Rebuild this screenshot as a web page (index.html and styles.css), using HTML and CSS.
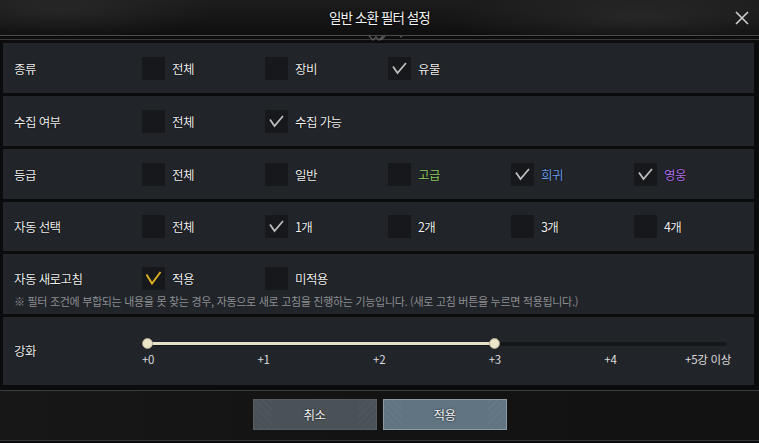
FILE: index.html
```html
<!DOCTYPE html>
<html lang="ko">
<head>
<meta charset="utf-8">
<title>일반 소환 필터 설정</title>
<link rel="stylesheet" href="styles.css">
</head>
<body>
<div class="dialog">
  <header class="titlebar">
    <div></div>
    <h1 class="title">일반 소환 필터 설정</h1>
    <button class="close" aria-label="닫기">
      <svg width="14" height="14" viewBox="0 0 14 14"><path d="M1 1 L13 13 M13 1 L1 13" stroke="#cfcfcf" stroke-width="1.6" fill="none"/></svg>
    </button>
  </header>
  <div class="divider">
    <svg class="ornament" width="40" height="8" viewBox="0 0 40 8"><path d="M2 1 L6 5 L9 2 L12 5 L16 1 M18 1 L14 5" stroke="#5a5a5a" stroke-width="1.3" fill="none"/><circle cx="34" cy="1.5" r="1.2" fill="#4a4a4a"/></svg>
  </div>
  <main class="rows">
    <section class="row">
      <div class="label">종류</div>
      <label class="opt"><span class="box"></span><span>전체</span></label>
      <label class="opt"><span class="box"></span><span>장비</span></label>
      <label class="opt"><span class="box checked"><svg viewBox="0 0 23 23"><path d="M5 9.5 L9.5 16 L18 6"/></svg></span><span>유물</span></label>
    </section>
    <section class="row">
      <div class="label">수집 여부</div>
      <label class="opt"><span class="box"></span><span>전체</span></label>
      <label class="opt"><span class="box checked"><svg viewBox="0 0 23 23"><path d="M5 9.5 L9.5 16 L18 6"/></svg></span><span>수집 가능</span></label>
    </section>
    <section class="row">
      <div class="label">등급</div>
      <label class="opt"><span class="box"></span><span>전체</span></label>
      <label class="opt"><span class="box"></span><span>일반</span></label>
      <label class="opt"><span class="box"></span><span class="grade-high">고급</span></label>
      <label class="opt"><span class="box checked"><svg viewBox="0 0 23 23"><path d="M5 9.5 L9.5 16 L18 6"/></svg></span><span class="grade-rare">희귀</span></label>
      <label class="opt"><span class="box checked"><svg viewBox="0 0 23 23"><path d="M5 9.5 L9.5 16 L18 6"/></svg></span><span class="grade-hero">영웅</span></label>
    </section>
    <section class="row row-short">
      <div class="label">자동 선택</div>
      <label class="opt"><span class="box"></span><span>전체</span></label>
      <label class="opt"><span class="box checked"><svg viewBox="0 0 23 23"><path d="M5 9.5 L9.5 16 L18 6"/></svg></span><span>1개</span></label>
      <label class="opt"><span class="box"></span><span>2개</span></label>
      <label class="opt"><span class="box"></span><span>3개</span></label>
      <label class="opt"><span class="box"></span><span>4개</span></label>
    </section>
    <section class="row row-refresh">
      <div class="label">자동 새로고침</div>
      <label class="opt"><span class="box checked gold"><svg viewBox="0 0 23 23"><path d="M4.5 7.5 L10 16.5 L18.5 5"/></svg></span><span>적용</span></label>
      <label class="opt"><span class="box"></span><span>미적용</span></label>
      <p class="note">※ 필터 조건에 부합되는 내용을 못 찾는 경우, 자동으로 새로 고침을 진행하는 기능입니다. (새로 고침 버튼을 누르면 적용됩니다.)</p>
    </section>
    <section class="row row-enhance">
      <div class="label">강화</div>
      <div class="slider">
        <div class="track">
          <div class="fill" style="width:60%"></div>
          <span class="thumb" style="left:0%"></span>
          <span class="thumb" style="left:60%"></span>
        </div>
        <div class="ticks">
          <span class="tick" style="left:0%">+0</span>
          <span class="tick" style="left:20%">+1</span>
          <span class="tick" style="left:40%">+2</span>
          <span class="tick" style="left:60%">+3</span>
          <span class="tick" style="left:80%">+4</span>
          <span class="tick tick-last" style="left:100%">+5강 이상</span>
        </div>
      </div>
    </section>
  </main>
  <footer class="footer">
    <button class="btn btn-cancel">취소</button>
    <button class="btn btn-ok">적용</button>
  </footer>
</div>
</body>
</html>
```
FILE: styles.css
```css
html, body {
  margin: 0;
  padding: 0;
  background: #0a0b0d;
}
body {
  width: 759px;
  height: 443px;
  overflow: hidden;
  font-family: "Noto Sans CJK KR", "Noto Sans", sans-serif;
  color: #e6e6e6;
}
.dialog {
  display: flex;
  flex-direction: column;
  height: 443px;
}
.titlebar {
  height: 35px;
  display: grid;
  grid-template-columns: 1fr auto 1fr;
  align-items: center;
  background:
    radial-gradient(ellipse 160px 30px at 60px 10px, rgba(80,80,80,0.25), transparent),
    radial-gradient(ellipse 200px 30px at 640px 18px, rgba(90,90,90,0.25), transparent),
    linear-gradient(#1c1c1c, #0f0f0f);
}
.title {
  margin: 0;
  font-size: 13.5px;
  font-weight: 400;
  letter-spacing: -0.9px;
  color: #f4f4f4;
  text-shadow: 0 0 1px #000, 0 0 2px #000;
  padding-bottom: 1px;
}
.close {
  justify-self: end;
  margin-right: 10px;
  width: 14px;
  height: 14px;
  padding: 0;
  border: 0;
  background: none;
  display: flex;
}
.divider {
  height: 8px;
  box-sizing: border-box;
  border-top: 1px solid #4a4a4a;
  background: linear-gradient(#0c0c0c 0, #0c0c0c 3px, #3a3a3a 3px, #3a3a3a 4px, #0c0c0c 4px);
  display: flex;
  justify-content: center;
}
.ornament {
  margin-left: 14px;
  margin-top: -1px;
}
.rows {
  display: flex;
  flex-direction: column;
  gap: 3px;
  padding: 0 5px 0 3px;
}
.row {
  height: 50px;
  box-sizing: border-box;
  background: #212429;
  display: grid;
  grid-template-columns: 128px repeat(5, 123px);
  align-items: center;
  padding-left: 11px;
}
.row-short {
  height: 49px;
}
.label {
  font-size: 12.5px;
  letter-spacing: -0.6px;
  color: #eeeeee;
  text-shadow: 0 0 1px #000, 0 0 1px #000;
}
.opt {
  display: flex;
  align-items: center;
  gap: 7px;
  font-size: 12.5px;
  letter-spacing: -0.6px;
  color: #f0f0f0;
  text-shadow: 0 0 1px #000, 0 0 1px #000;
}
.box {
  width: 23px;
  height: 23px;
  background: #16181b;
  flex: none;
  display: flex;
}
.box svg {
  width: 23px;
  height: 23px;
}
.box svg path {
  fill: none;
  stroke: #bdbdbd;
  stroke-width: 1.8;
  stroke-linejoin: miter;
}
.box.gold svg path {
  stroke: #dcae22;
  stroke-width: 2;
}
.grade-high { color: #8fce64; }
.grade-rare { color: #6e9fe6; }
.grade-hero { color: #b474ea; }

.row-refresh {
  height: 60px;
  grid-template-rows: 23px auto;
  align-content: start;
  padding-top: 13px;
}
.note {
  grid-column: 1 / -1;
  margin: 3px 0 0;
  font-size: 11px;
  letter-spacing: -0.3px;
  color: #8c8e91;
  white-space: nowrap;
}
.row-enhance {
  height: 68px;
  grid-template-columns: 128px 1fr;
}
.row-enhance .label {
  padding-bottom: 1px;
}
.slider {
  padding: 0 0 0 6px;
  width: 578px;
}
.track {
  position: relative;
  height: 4px;
  background: #15171a;
  margin-top: 6px;
}
.fill {
  position: absolute;
  left: 0;
  top: 0.5px;
  height: 3px;
  background: #e9e1c5;
}
.thumb {
  position: absolute;
  top: -4px;
  width: 11px;
  height: 11px;
  margin-left: -6px;
  border-radius: 50%;
  background: #ece5c9;
  box-sizing: border-box;
  border: 1px solid #a9a28a;
}
.ticks {
  position: relative;
  height: 16px;
  margin-top: 5px;
}
.tick {
  position: absolute;
  top: 0;
  transform: translateX(-50%);
  font-size: 11.5px;
  color: #dcdcdc;
  white-space: nowrap;
  letter-spacing: -0.3px;
}
.tick-last {
  transform: translateX(calc(-100% + 5px));
}
.footer {
  margin-top: 5px;
  height: 51px;
  box-sizing: border-box;
  border-top: 1px solid #3c3c3c;
  border-bottom: 1px solid #353535;
  background: linear-gradient(90deg, #171717, #131313 50%, #121212);
  display: flex;
  justify-content: center;
  align-items: flex-start;
  gap: 6px;
  padding-top: 8px;
}
.btn {
  width: 124px;
  height: 31px;
  font-family: inherit;
  font-size: 12.5px;
  letter-spacing: -0.5px;
  color: #f2f2f2;
  text-shadow: 0 0 2px #000;
  cursor: pointer;
  box-sizing: border-box;
}
.btn-cancel {
  background:
    repeating-linear-gradient(45deg, rgba(255,255,255,0.025) 0 2px, transparent 2px 5px) left / 18px 100% no-repeat,
    repeating-linear-gradient(-45deg, rgba(255,255,255,0.025) 0 2px, transparent 2px 5px) right / 18px 100% no-repeat,
    #4a5257;
  border: 1px solid #565e63;
}
.btn-ok {
  background:
    repeating-linear-gradient(45deg, rgba(255,255,255,0.03) 0 2px, transparent 2px 5px) left / 18px 100% no-repeat,
    repeating-linear-gradient(-45deg, rgba(255,255,255,0.03) 0 2px, transparent 2px 5px) right / 18px 100% no-repeat,
    #607482;
  border: 1px solid #8b9aa4;
}
```
